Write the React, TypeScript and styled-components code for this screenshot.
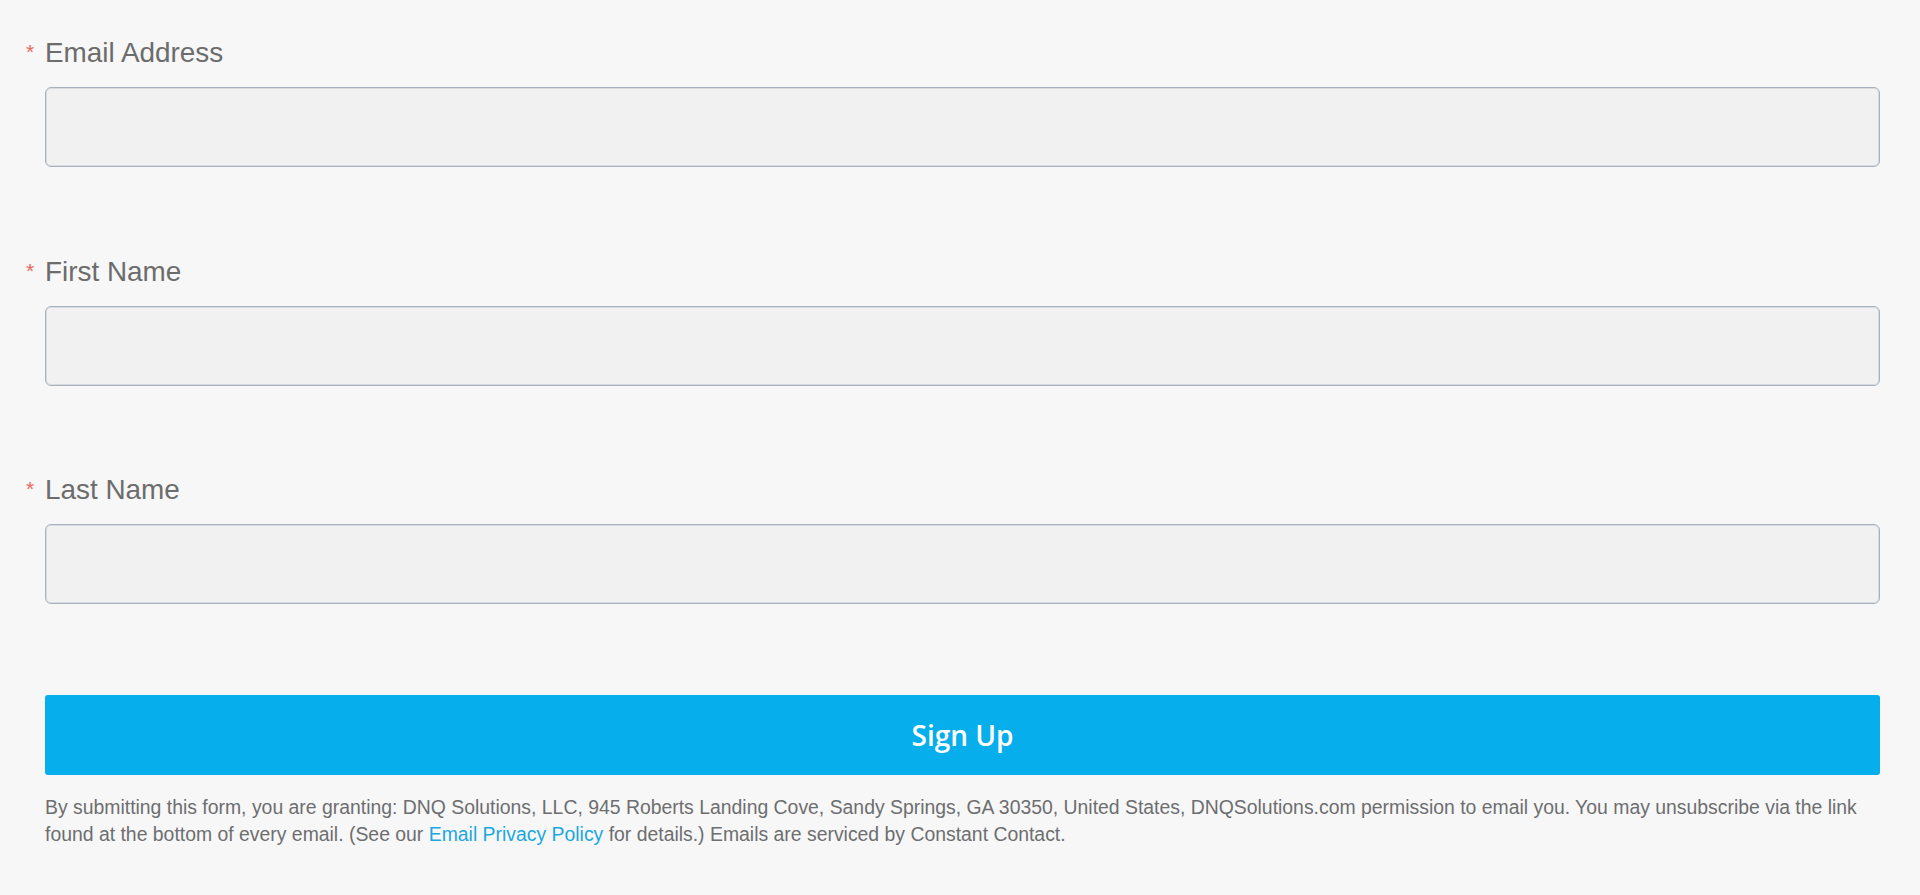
import styled, { createGlobalStyle } from "styled-components";

const GlobalStyle = createGlobalStyle`
    html, body {
        margin: 0;
        padding: 0;
        background: #f7f7f7;
    }
`

const Page = styled.div`
    min-height: 895px;
    box-sizing: border-box;
    padding: 37px 40px 40px 45px;
    background: #f7f7f7;
    font-family: "Liberation Sans", Arial, sans-serif;
`

const Form = styled.form`
    display: flex;
    flex-direction: column;
    gap: 88.5px;
`

const Field = styled.div`
    display: flex;
    flex-direction: column;
    gap: 19px;
`

const Label = styled.label`
    display: flex;
    align-items: flex-start;
    margin-left: -19px;
    font-size: 27.9px;
    line-height: 31px;
    color: #6c6c6c;
`

const Required = styled.span`
    width: 9px;
    margin-right: 10px;
    font-size: 21px;
    line-height: 24px;
    padding-top: 3px;
    color: #e8675f;
`

const Input = styled.input`
    box-sizing: border-box;
    width: 100%;
    height: 80px;
    padding: 0 16px;
    border: 1px solid #a7b2bd;
    border-radius: 6px;
    box-shadow: inset 0 0 0 1px #d9dcdf;
    background: #f1f1f1;
    font-size: 24px;
    outline: none;
`

const Footer = styled.div`
    display: flex;
    flex-direction: column;
    gap: 19px;
    margin-top: 2px;
`

const SubmitButton = styled.button`
    width: 100%;
    height: 80px;
    border: none;
    border-radius: 3px;
    background: #06aeec;
    color: #ffffff;
    font-family: "Open Sans", sans-serif;
    font-weight: 600;
    font-size: 28px;
    cursor: pointer;
`

const Disclaimer = styled.p`
    margin: 0;
    font-size: 19.4px;
    line-height: 27px;
    color: #6d6e70;

    a {
        color: #1ba8e0;
        text-decoration: none;
    }
`

const fields = [
    { id: "email", label: "Email Address", type: "email" },
    { id: "first", label: "First Name", type: "text" },
    { id: "last", label: "Last Name", type: "text" },
];

const App = () => {
    return (
        <>
            <GlobalStyle />
            <Page>
                <Form onSubmit={(e) => e.preventDefault()}>
                    {fields.map((f) => (
                        <Field key={f.id}>
                            <Label htmlFor={f.id}>
                                <Required>*</Required>
                                {f.label}
                            </Label>
                            <Input id={f.id} type={f.type} />
                        </Field>
                    ))}
                    <Footer>
                        <SubmitButton type="submit">Sign Up</SubmitButton>
                        <Disclaimer>
                            By submitting this form, you are granting: DNQ Solutions, LLC, 945 Roberts Landing Cove, Sandy Springs, GA 30350, United States, DNQSolutions.com permission to email you. You may unsubscribe via the link found at the bottom of every email. (See our <a href="#">Email Privacy Policy</a> for details.) Emails are serviced by Constant Contact.
                        </Disclaimer>
                    </Footer>
                </Form>
            </Page>
        </>
    )
}

export default App;
